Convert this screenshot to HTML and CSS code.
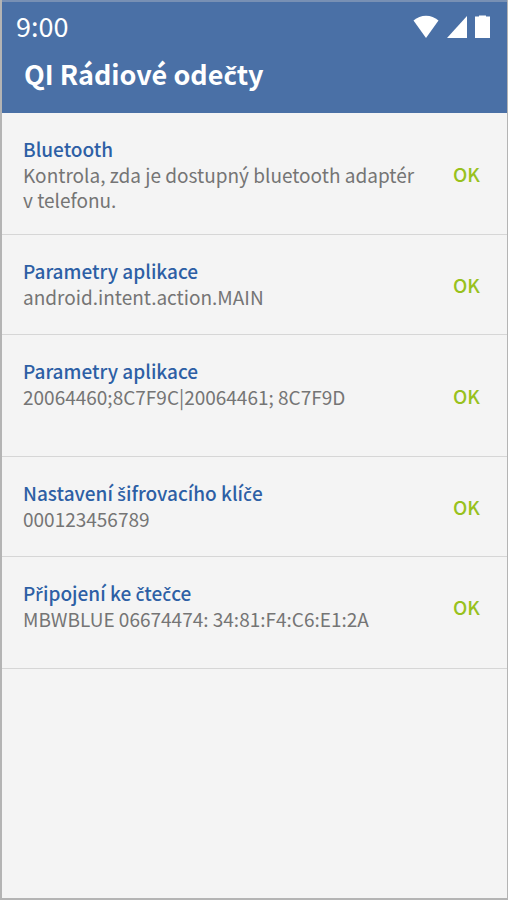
FILE: index.html
```html
<!DOCTYPE html>
<html lang="cs">
<head>
  <meta charset="utf-8">
  <meta name="viewport" content="width=device-width, initial-scale=1">
  <title>QI Rádiové odečty</title>
  <link rel="stylesheet" href="styles.css">
</head>
<body>
  <header class="header">
    <div class="statusbar">
      <span class="time">9:00</span>
      <div class="icons">
        <svg width="26" height="24" viewBox="0 0 26 24"><path d="M0.5 5.5Q6 0.8 13 0.8T25.500 5.500L13 23Z"/></svg>
        <svg width="20" height="24" viewBox="0 0 20 24"><path d="M20 1V23H0Z"/></svg>
        <svg width="15" height="24" viewBox="0 0 15 24"><path d="M0 1.500H4V0.500H11V1.500H15V23H0Z"/></svg>
      </div>
    </div>
    <h1>QI Rádiové ode<span class="hacek">č</span>ty</h1>
  </header>

  <main class="list">
    <section class="row tall">
      <div class="text">
        <h2>Bluetooth</h2>
        <p>Kontrola, zda je dostupný bluetooth adaptér v&nbsp;telefonu.</p>
      </div>
      <span class="ok">OK</span>
    </section>

    <section class="row">
      <div class="text">
        <h2>Parametry aplikace</h2>
        <p>android.intent.action.MAIN</p>
      </div>
      <span class="ok">OK</span>
    </section>

    <section class="row tall">
      <div class="text">
        <h2>Parametry aplikace</h2>
        <p>20064460;8C7F9C|20064461; 8C7F9D</p>
      </div>
      <span class="ok">OK</span>
    </section>

    <section class="row">
      <div class="text">
        <h2>Nastavení <span class="hacek">š</span>ifrovacího klí<span class="hacek">č</span>e</h2>
        <p>000123456789</p>
      </div>
      <span class="ok">OK</span>
    </section>

    <section class="row last">
      <div class="text">
        <h2>P<span class="hacek">ř</span>ipojení ke <span class="hacek">č</span>te<span class="hacek">č</span>ce</h2>
        <p>MBWBLUE 06674474: 34:81:F4:C6:E1:2A</p>
      </div>
      <span class="ok">OK</span>
    </section>
  </main>
</body>
</html>
```
FILE: styles.css
```css
* {
  box-sizing: border-box;
}
body {
  margin: 0;
  min-height: 100vh;
  border: 2px solid #b4b4b4;
  border-top: none;
  border-right-width: 1px;
  background-color: #f4f4f4;
  font-family: "Noto Sans CJK SC", "Noto Sans", sans-serif;
  font-size: 19px;
  color: #757575;
}
h1, h2, p {
  margin: 0;
}

/* header */
.header {
  margin-left: -2px;
  padding: 8px 17px 21px 16px;
  border-top: 2px solid #7890b4;
  background-color: #4a70a6;
  color: #fff;
}
.statusbar {
  display: flex;
  justify-content: space-between;
  height: 32px;
}
.time {
  font-size: 27px;
  line-height: 32px;
}
.icons {
  display: flex;
  gap: 8px;
  padding-top: 5px;
}
.icons svg {
  fill: #fff;
}
h1 {
  margin-top: 14px;
  padding-left: 8px;
  font-size: 27px;
  font-weight: 700;
  line-height: 36px;
}

/* list of checks */
.row {
  display: flex;
  align-items: center;
  justify-content: space-between;
  min-height: 100px;
  padding: 0 27px 0 21px;
  border-bottom: 1px solid #d6d6d6;
}
.tall {
  min-height: 122px;
}
.last {
  min-height: 112px;
  padding-bottom: 12px;
}
.text {
  align-self: flex-start;
  width: 400px;
  padding-top: 23px;
}
h2 {
  font-size: 19px;
  font-weight: 500;
  line-height: 26px;
  color: #2d5fa5;
}
p {
  line-height: 25px;
}
.ok {
  font-weight: 500;
  color: #98c11d;
}

.hacek {
  font-family: "Noto Sans", sans-serif;
  font-size: 95%;
  line-height: 1;
}
```
